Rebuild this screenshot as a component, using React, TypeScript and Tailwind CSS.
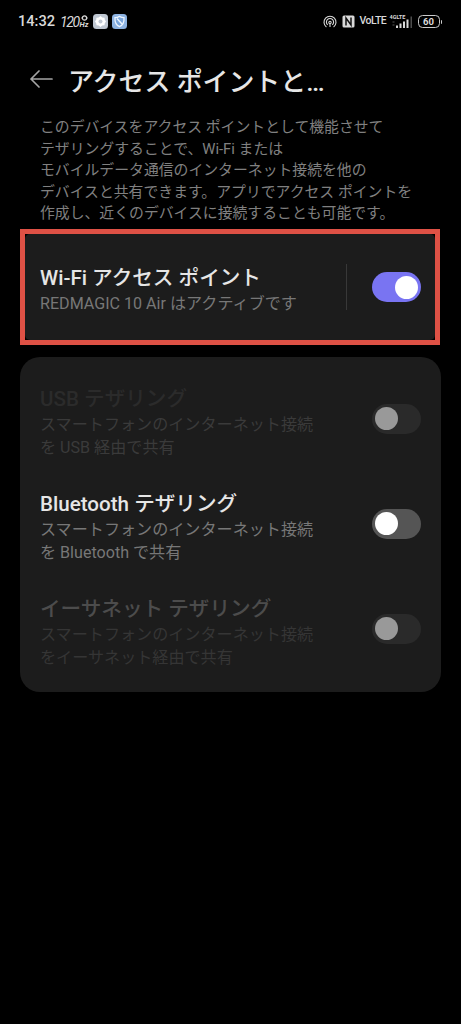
import clsx from "clsx";

interface ISwitchProps {
  on?: boolean;
  disabled?: boolean;
}

interface IRowProps {
  title: string;
  lines: string[];
  titleColor: string;
  textColor: string;
  disabled?: boolean;
}

const rows: IRowProps[] = [
  {
    title: "USB テザリング",
    lines: ["スマートフォンのインターネット接続", "を USB 経由で共有"],
    titleColor: "text-[#2b2b2b]",
    textColor: "text-[#3a3a3a]",
    disabled: true,
  },
  {
    title: "Bluetooth テザリング",
    lines: ["スマートフォンのインターネット接続", "を Bluetooth で共有"],
    titleColor: "text-[#e6e6e6]",
    textColor: "text-[#777777]",
  },
  {
    title: "イーサネット テザリング",
    lines: ["スマートフォンのインターネット接続", "をイーサネット経由で共有"],
    titleColor: "text-[#4c4c4c]",
    textColor: "text-[#353535]",
    disabled: true,
  },
];

function Switch({ on, disabled }: ISwitchProps) {
  return (
    <button
      type="button"
      role="switch"
      aria-checked={!!on}
      disabled={disabled}
      className={clsx(
        "flex h-[30px] w-[49.5px] shrink-0 items-center rounded-full px-[3.5px]",
        on ? "justify-end bg-[#7974f2]" : "justify-start",
        !on && (disabled ? "bg-[#2a2a2a]" : "bg-[#555555]")
      )}
    >
      <span className={clsx("size-[23px] rounded-full", disabled ? "bg-[#999999]" : "bg-white")} />
    </button>
  );
}

function StatusBar() {
  return (
    <div className="flex h-[43px] items-center pl-[18px] pr-[19px] text-[#d9d9d9]">
      <span className="w-[42px] text-[14.6px] font-medium leading-none">14:32</span>
      <span className="w-[18px] text-[14px] italic leading-none tracking-[-1.4px]">120</span>
      <span className="flex w-[12px] flex-col items-center">
        <svg width="7" height="6" viewBox="0 0 7 6" fill="none" stroke="currentColor" strokeWidth="1.2">
          <circle cx="3.5" cy="3" r="2.1" />
          <path d="M.3 3h1.4M5.3 3h1.4" />
        </svg>
        <span className="text-[7.5px] font-bold italic leading-[7px]">Hz</span>
      </span>

      <svg className="ml-[3px]" width="15" height="15" viewBox="0 0 15 15">
        <rect width="15" height="15" rx="3.5" fill="#bfc7d2" />
        <path d="M7.5 1.900 9.300 3.400l2.200.3.3 2.100 1.200 1.700-1.200 1.700-.3 2.100-2.200.3L7.500 13.100 5.700 11.600l-2.200-.3-.3-2.100L2 7.500l1.200-1.700.3-2.100 2.200-.3Z" fill="#fff" />
        <circle cx="7.5" cy="7.5" r="2" fill="#bfc7d2" />
      </svg>
      <svg className="ml-[4px]" width="15" height="15" viewBox="0 0 15 15">
        <rect width="15" height="15" rx="3.5" fill="#8db3e2" />
        <path d="M3 3.700c1.800.1 3-.4 4.500-1.300 1.500.9 2.700 1.400 4.500 1.300.3 4.300-.9 7.300-4.500 9C3.900 11 2.700 8 3 3.700Z" fill="#79a6dc" stroke="#edf5ff" strokeWidth="1.3" />
        <path d="m5 4.500 5 5.500" stroke="#edf5ff" strokeWidth="1.5" />
      </svg>

      <div className="ml-auto flex items-center">
        <svg width="14" height="14" viewBox="0 0 14 14" fill="none" stroke="currentColor" strokeWidth="1.1">
          <path d="M3.400 12a6 6 0 1 1 7.200 0" />
          <path d="M4.700 9.800a3.600 3.600 0 1 1 4.600 0" />
          <circle cx="7" cy="7.5" r="1.2" />
          <path d="M7 8.500v3.500" />
        </svg>
        <svg className="ml-[5px]" width="13" height="13" viewBox="0 0 13 13">
          <rect x=".5" y=".5" width="12" height="12" rx="1.5" fill="#d9d9d9" />
          <path d="M4 10.500V3l5 7V2.500" fill="none" stroke="#111" strokeWidth="1.5" />
        </svg>
        <span className="ml-[5px] w-[31px] text-[10.5px] font-medium leading-none tracking-[-0.5px]">VoLTE</span>
        <div className="relative h-[14px] w-[22px]">
          <span className="absolute left-[-1px] top-[-1px] text-[5.5px] font-bold leading-[7px]">4GLTE</span>
          <svg className="absolute inset-0" width="22" height="14" viewBox="0 0 22 14" fill="currentColor">
            <path d="M1.500 6.500h2v1h-2zM1.500 9.500h2v1h-2z" opacity=".4" />
            <path d="M5 10.500h2V13H5zM8.500 8.500h2V13h-2zM12 6.500h2V13h-2zM15.500 4.500h2V13h-2z" />
            <path d="M19.500 1.500h1.500V13h-1.500z" opacity=".35" />
          </svg>
        </div>
        <div className="ml-[5px] flex h-[12.5px] w-[22px] items-center justify-center rounded-[4.5px] border-[1.5px] border-[#c9c9c9]">
          <span className="text-[9.5px] font-bold leading-none">60</span>
        </div>
        <div className="ml-px h-[4px] w-[1.5px] rounded-r bg-[#c9c9c9]" />
      </div>
    </div>
  );
}

function TetheringRow({ title, lines, titleColor, textColor, disabled }: IRowProps) {
  return (
    <div className="flex h-[105px] items-center justify-between">
      <div className="pt-[7px]">
        <h2 className={clsx("text-[20.6px] font-medium leading-[28px]", titleColor)}>{title}</h2>
        <p className={clsx("text-[16.1px] leading-[23px]", textColor)}>
          {lines.map((line) => (
            <span key={line} className="block whitespace-nowrap">{line}</span>
          ))}
        </p>
      </div>
      <Switch disabled={disabled} />
    </div>
  );
}

export default function App() {
  return (
    <main className="h-[1024px] w-[461px] overflow-hidden bg-black font-[Roboto,'Noto_Sans_CJK_JP',sans-serif]">
      <StatusBar />

      <header className="flex h-[74px] items-center pl-[30px]">
        <svg className="-mt-[3px]" width="23" height="18" viewBox="0 0 23 18" fill="none" stroke="#a5a5a5" strokeWidth="1.7" strokeLinecap="round" strokeLinejoin="round">
          <path d="M22 9H1M9 1 1 9l8 8" />
        </svg>
        <h1 className="ml-[15px] whitespace-nowrap pt-[3px] text-[25.9px] font-medium leading-[36px] text-[#e6e6e6]">アクセス ポイントと…</h1>
      </header>

      <p className="h-[112px] whitespace-nowrap pl-[40px] text-[14.85px] leading-[21.5px] text-[#808080]">
        このデバイスをアクセス ポイントとして機能させて<br />
        テザリングすることで、Wi-Fi または<br />
        モバイルデータ通信のインターネット接続を他の<br />
        デバイスと共有できます。アプリでアクセス ポイントを<br />
        作成し、近くのデバイスに接続することも可能です。
      </p>

      <section className="ml-[20px] h-[116px] w-[420px] border-[5px] border-[#de5145] bg-black">
        <div className="flex h-full items-center rounded-[5px] bg-[#1c1c1c] pl-[15px] pr-[14px]">
          <div className="pt-[4px]">
            <h2 className="text-[20.6px] font-medium leading-[28px] text-[#e6e6e6]">Wi-Fi アクセス ポイント</h2>
            <p className="text-[16.1px] leading-[23px] text-[#777777]">REDMAGIC 10 Air はアクティブです</p>
          </div>
          <div className="ml-auto mr-[24.5px] h-[46px] w-px bg-[#383838]" />
          <Switch on />
        </div>
      </section>

      <section className="ml-[20px] mt-[12px] h-[335px] w-[421px] rounded-[20px] bg-[#1c1c1c] px-[20px] pt-[9px]">
        {rows.map((row) => (
          <TetheringRow key={row.title} {...row} />
        ))}
      </section>
    </main>
  );
}
